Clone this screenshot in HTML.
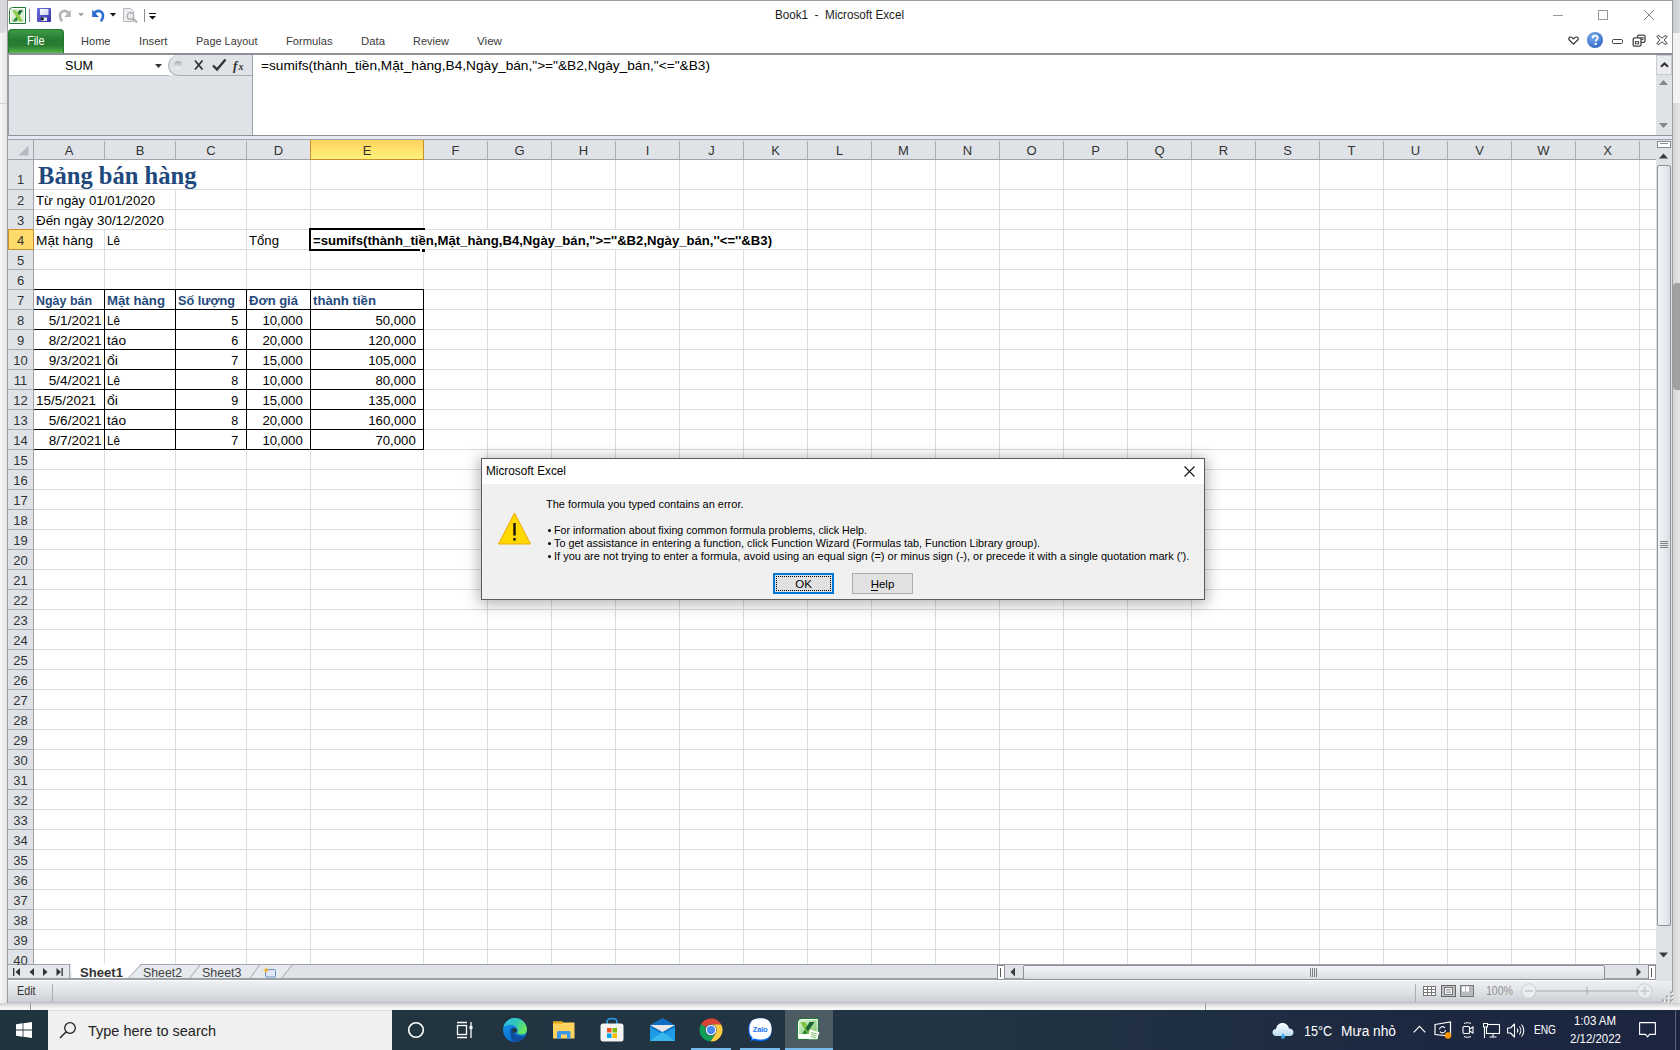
<!DOCTYPE html>
<html><head><meta charset="utf-8"><title>Book1 - Microsoft Excel</title>
<style>
*{box-sizing:border-box;margin:0;padding:0}
html,body{width:1680px;height:1050px;overflow:hidden}
body{position:relative;background:#f3f3f3;font-family:"Liberation Sans",sans-serif;color:#000}
.a{position:absolute}
.t{position:absolute;white-space:pre;line-height:1}
svg{position:absolute;overflow:visible}
</style></head><body>

<div class="a" style="left:0px;top:0px;width:8px;height:1010px;background:linear-gradient(90deg,#f6f6f6,#e2e2e2);"></div>
<div class="a" style="left:0px;top:103px;width:7px;height:1px;background:#cfcfcf;"></div>
<div class="a" style="left:0px;top:0px;width:7px;height:33px;background:#d6d8db;border-radius:0 0 6px 0"></div>
<div class="a" style="left:1672px;top:0px;width:8px;height:1010px;background:linear-gradient(90deg,#d2d2d2,#e6e6e6);"></div>
<div class="a" style="left:1673px;top:0px;width:7px;height:33px;background:linear-gradient(90deg,#c6c9cd,#d9dbde);"></div>
<div class="a" style="left:1673px;top:33px;width:7px;height:70px;background:#f3f3f3;"></div>
<div class="a" style="left:1673px;top:283px;width:7px;height:107px;background:#a0a0a0;border-radius:4px 0 0 4px"></div>
<div class="a" style="left:7px;top:0px;width:1666px;height:1003px;background:#fff;border:1px solid #9c9c9c;border-bottom:none"></div>
<div class="a" style="left:1553px;top:15px;width:10px;height:1px;background:#999;"></div>
<div class="a" style="left:1598px;top:10px;width:10px;height:10px;background:transparent;border:1px solid #999"></div>
<svg style="left:1643px;top:9px" width="12" height="12"><path d="M1 1L11 11M11 1L1 11" stroke="#8a8a8a" stroke-width="1"/></svg>
<svg style="left:9px;top:7px" width="17" height="17" viewBox="0 0 17 17">
<path d="M3.5 0.5H16.5V16.5H0.5V3.5Q0.5 0.5 3.5 0.5Z" fill="#fff" stroke="#1f7a33" stroke-width="1"/>
<path d="M3.5 2H15V15H2V3.5Q2 2 3.5 2Z" fill="#d9eed4"/>
<path d="M10.2 3.3H14L9.6 9.4L7.7 7Z" fill="#1c6a33"/>
<path d="M7.4 9.6L9.3 12L7.3 14.5H3.3Z" fill="#2f8d3c"/>
<path d="M3.3 3.3H7.1L14 14.5H10.2Z" fill="#8ccc48"/>
</svg>
<div class="a" style="left:29px;top:9px;width:1px;height:13px;background:#8a8a8a;"></div>
<svg style="left:37px;top:8px" width="15" height="14" viewBox="0 0 15 14">
<defs><linearGradient id="svg1" x1="0" y1="0" x2="1" y2="1"><stop offset="0" stop-color="#7070e0"/><stop offset="1" stop-color="#3434a8"/></linearGradient>
<linearGradient id="svg2" x1="0" y1="0" x2="1" y2="1"><stop offset="0" stop-color="#ffffff"/><stop offset="1" stop-color="#c8d0ee"/></linearGradient></defs>
<rect x="0" y="0" width="14" height="14" rx="1" fill="url(#svg1)"/>
<rect x="3" y="1" width="8.5" height="6" fill="url(#svg2)"/>
<rect x="4" y="9.5" width="6" height="3.5" fill="#e8e8f0"/>
<rect x="4" y="9.5" width="2.6" height="2.8" fill="#111"/>
</svg>
<svg style="left:58px;top:8px" width="14" height="14" viewBox="0 0 14 14">
<path d="M3.5 12.5C1 9 1.5 4 5.5 3C8 2.4 9.5 3.5 10.5 5" fill="none" stroke="#b4b4b4" stroke-width="2.6" stroke-linecap="round"/>
<path d="M12.8 1.8V9H6.2Z" fill="#b4b4b4"/>
</svg>
<svg style="left:78px;top:13px" width="6" height="4"><path d="M0 0H6L3 3.5Z" fill="#a8a8a8"/></svg>
<svg style="left:91px;top:8px" width="14" height="14" viewBox="0 0 14 14">
<path d="M10.5 12.5C13 9 12.5 4 8.5 3C6 2.4 4.5 3.5 3.5 5" fill="none" stroke="#2f6fd8" stroke-width="2.6" stroke-linecap="round"/>
<path d="M1.2 1.8V9H7.8Z" fill="#2a66d0"/>
</svg>
<svg style="left:110px;top:13px" width="6" height="4"><path d="M0 0H6L3 3.5Z" fill="#111"/></svg>
<svg style="left:123px;top:8px" width="16" height="16" viewBox="0 0 16 16">
<path d="M0.5 0.5H7.5L10.5 3.5V13.5H0.5Z" fill="#ececf2" stroke="#b8b8b8"/>
<circle cx="7.5" cy="8" r="3.3" fill="#e8e8ee" stroke="#a8a8a8" stroke-width="1.2"/>
<path d="M10 10.5L14 14.5" stroke="#b0b0b0" stroke-width="2.2"/>
</svg>
<div class="a" style="left:144px;top:9px;width:1px;height:13px;background:#8a8a8a;"></div>
<div class="a" style="left:149px;top:13px;width:7px;height:1px;background:#111;"></div>
<svg style="left:149px;top:16px" width="7" height="4"><path d="M0 0H7L3.5 3.5Z" fill="#111"/></svg>
<div class="a" style="left:8px;top:29px;width:56px;height:24px;background:linear-gradient(180deg,#3f9a45 0%,#237a30 45%,#2a7e31 70%,#5bb84c 100%);border:1px solid #217a30;border-bottom:none;border-radius:4px 4px 0 0"></div>
<svg style="left:1568px;top:36px" width="11" height="9" viewBox="0 0 11 9"><path d="M5.5 8.2L1.3 4C0.2 2.9 0.8 1 2.5 1C3.6 1 4.6 1.7 5.5 2.8C6.4 1.7 7.4 1 8.5 1C10.2 1 10.8 2.9 9.7 4Z" fill="#fff" stroke="#333" stroke-width="1.2" stroke-linejoin="round"/></svg>
<svg style="left:1587px;top:32px" width="17" height="17" viewBox="0 0 17 17">
<defs><radialGradient id="hg" cx="0.4" cy="0.3" r="0.8"><stop offset="0" stop-color="#7fb0f0"/><stop offset="1" stop-color="#2a5fbf"/></radialGradient></defs>
<circle cx="8" cy="8" r="8" fill="url(#hg)"/>
<path d="M5.6 6.2C5.6 4.6 6.8 3.6 8.2 3.6C9.7 3.6 10.7 4.6 10.7 5.9C10.7 7.6 8.6 7.8 8.6 9.6" fill="none" stroke="#fff" stroke-width="1.7"/>
<rect x="7.6" y="11" width="2" height="2" fill="#fff"/>
</svg>
<div class="a" style="left:1612px;top:39px;width:11px;height:5px;background:transparent;border:1.3px solid #444;border-radius:1.5px"></div>
<svg style="left:1632px;top:34px" width="15" height="14" viewBox="0 0 15 14">
<rect x="5.6" y="1.2" width="7.4" height="7.2" rx="1.3" fill="#fff" stroke="#444" stroke-width="1.3"/>
<rect x="9" y="3.6" width="2" height="2" fill="none" stroke="#444" stroke-width="0.9"/>
<rect x="1.2" y="3.9" width="7.8" height="8.2" rx="1.3" fill="#fff" stroke="#444" stroke-width="1.3"/>
<rect x="3.4" y="7.6" width="3.2" height="2.2" fill="none" stroke="#444" stroke-width="1"/>
</svg>
<svg style="left:1656px;top:35px" width="12" height="10" viewBox="0 0 12 10"><path d="M0.8 1.3L3 0.6L6 3.2L9 0.6L11.2 1.3L8.3 5L11.2 8.7L9 9.4L6 6.8L3 9.4L0.8 8.7L3.7 5Z" fill="#fff" stroke="#444" stroke-width="1" stroke-linejoin="round"/></svg>
<div class="a" style="left:8px;top:53px;width:1664px;height:2px;background:#8c9096;"></div>
<div class="a" style="left:8px;top:55px;width:1648px;height:81px;background:#fff;"></div>
<div class="a" style="left:8px;top:75px;width:245px;height:61px;background:#dfe2e7;"></div>
<div class="a" style="left:8px;top:75px;width:161px;height:1px;background:#b0b4ba;"></div>
<div class="a" style="left:168px;top:55px;width:85px;height:21px;background:#dfe2e7;border-radius:11px 0 0 11px;border:1px solid #a8acb2;border-right:none;border-top:none"></div>
<div class="a" style="left:252px;top:55px;width:1px;height:81px;background:#9da1a7;"></div>
<svg style="left:155px;top:64px" width="7" height="4"><path d="M0 0H7L3.5 4Z" fill="#333"/></svg>
<svg style="left:172px;top:59px" width="82" height="14" viewBox="0 0 82 14">
<defs><linearGradient id="cg" x1="0" y1="0" x2="0" y2="1"><stop offset="0" stop-color="#a9acb1"/><stop offset="1" stop-color="#f4f5f7"/></linearGradient></defs>
<circle cx="6" cy="6" r="4" fill="url(#cg)"/>
<path d="M23 1.5L30.5 10.5M30.5 1.5L23 10.5" stroke="#333" stroke-width="1.8"/>
<path d="M41 6.5L45 10.5L53.5 0.5" fill="none" stroke="#333" stroke-width="2.4"/>
<text x="61" y="10.5" font-family="Liberation Serif" font-style="italic" font-weight="bold" font-size="13" fill="#333">f</text>
<text x="66.5" y="11" font-family="Liberation Serif" font-style="italic" font-weight="bold" font-size="10" fill="#333">x</text>
</svg>
<div class="a" style="left:1656px;top:55px;width:16px;height:81px;background:#dfe2e7;"></div>
<div class="a" style="left:1656px;top:55px;width:16px;height:20px;background:#e9ebee;border:1px solid #c9ccd1"></div>
<svg style="left:1660px;top:62px" width="9" height="6"><path d="M1 4.8L4.5 1.5L8 4.8" fill="none" stroke="#333" stroke-width="2.2"/></svg>
<svg style="left:1659px;top:80px" width="10" height="6"><path d="M0 5H9L4.5 0Z" fill="#7d8a8a"/></svg>
<svg style="left:1659px;top:123px" width="10" height="6"><path d="M0 0H9L4.5 5Z" fill="#7d8a8a"/></svg>
<div class="a" style="left:8px;top:135px;width:1664px;height:1px;background:#8e9399;"></div>
<div class="a" style="left:8px;top:136px;width:1664px;height:3px;background:#e6e9f3;"></div>
<div class="a" style="left:8px;top:139px;width:1664px;height:1px;background:#9fa3a9;"></div>
<div class="a" style="left:8px;top:140px;width:1648px;height:20px;background:#dfe3e8;"></div>
<div class="a" style="left:8px;top:159px;width:1648px;height:1px;background:#9fa3a9;"></div>
<svg style="left:18px;top:145px" width="11" height="11"><path d="M10.5 0.5V10.5H0.5Z" fill="#b7bbc1"/></svg>
<div class="a" style="left:34px;top:160px;width:1622px;height:804px;background:#fff;"></div>
<div class="a" style="left:8px;top:160px;width:25px;height:804px;background:#dfe3e8;"></div>
<div class="a" style="left:33px;top:140px;width:1px;height:824px;background:#9fa3a9;"></div>
<div class="a" style="left:104px;top:160px;width:1px;height:804px;background:#dadcdd;"></div>
<div class="a" style="left:104px;top:141px;width:1px;height:18px;background:#a9adb2;"></div>
<div class="a" style="left:175px;top:160px;width:1px;height:804px;background:#dadcdd;"></div>
<div class="a" style="left:175px;top:141px;width:1px;height:18px;background:#a9adb2;"></div>
<div class="a" style="left:246px;top:160px;width:1px;height:804px;background:#dadcdd;"></div>
<div class="a" style="left:246px;top:141px;width:1px;height:18px;background:#a9adb2;"></div>
<div class="a" style="left:310px;top:160px;width:1px;height:804px;background:#dadcdd;"></div>
<div class="a" style="left:310px;top:141px;width:1px;height:18px;background:#a9adb2;"></div>
<div class="a" style="left:423px;top:160px;width:1px;height:804px;background:#dadcdd;"></div>
<div class="a" style="left:423px;top:141px;width:1px;height:18px;background:#a9adb2;"></div>
<div class="a" style="left:487px;top:160px;width:1px;height:804px;background:#dadcdd;"></div>
<div class="a" style="left:487px;top:141px;width:1px;height:18px;background:#a9adb2;"></div>
<div class="a" style="left:551px;top:160px;width:1px;height:804px;background:#dadcdd;"></div>
<div class="a" style="left:551px;top:141px;width:1px;height:18px;background:#a9adb2;"></div>
<div class="a" style="left:615px;top:160px;width:1px;height:804px;background:#dadcdd;"></div>
<div class="a" style="left:615px;top:141px;width:1px;height:18px;background:#a9adb2;"></div>
<div class="a" style="left:679px;top:160px;width:1px;height:804px;background:#dadcdd;"></div>
<div class="a" style="left:679px;top:141px;width:1px;height:18px;background:#a9adb2;"></div>
<div class="a" style="left:743px;top:160px;width:1px;height:804px;background:#dadcdd;"></div>
<div class="a" style="left:743px;top:141px;width:1px;height:18px;background:#a9adb2;"></div>
<div class="a" style="left:807px;top:160px;width:1px;height:804px;background:#dadcdd;"></div>
<div class="a" style="left:807px;top:141px;width:1px;height:18px;background:#a9adb2;"></div>
<div class="a" style="left:871px;top:160px;width:1px;height:804px;background:#dadcdd;"></div>
<div class="a" style="left:871px;top:141px;width:1px;height:18px;background:#a9adb2;"></div>
<div class="a" style="left:935px;top:160px;width:1px;height:804px;background:#dadcdd;"></div>
<div class="a" style="left:935px;top:141px;width:1px;height:18px;background:#a9adb2;"></div>
<div class="a" style="left:999px;top:160px;width:1px;height:804px;background:#dadcdd;"></div>
<div class="a" style="left:999px;top:141px;width:1px;height:18px;background:#a9adb2;"></div>
<div class="a" style="left:1063px;top:160px;width:1px;height:804px;background:#dadcdd;"></div>
<div class="a" style="left:1063px;top:141px;width:1px;height:18px;background:#a9adb2;"></div>
<div class="a" style="left:1127px;top:160px;width:1px;height:804px;background:#dadcdd;"></div>
<div class="a" style="left:1127px;top:141px;width:1px;height:18px;background:#a9adb2;"></div>
<div class="a" style="left:1191px;top:160px;width:1px;height:804px;background:#dadcdd;"></div>
<div class="a" style="left:1191px;top:141px;width:1px;height:18px;background:#a9adb2;"></div>
<div class="a" style="left:1255px;top:160px;width:1px;height:804px;background:#dadcdd;"></div>
<div class="a" style="left:1255px;top:141px;width:1px;height:18px;background:#a9adb2;"></div>
<div class="a" style="left:1319px;top:160px;width:1px;height:804px;background:#dadcdd;"></div>
<div class="a" style="left:1319px;top:141px;width:1px;height:18px;background:#a9adb2;"></div>
<div class="a" style="left:1383px;top:160px;width:1px;height:804px;background:#dadcdd;"></div>
<div class="a" style="left:1383px;top:141px;width:1px;height:18px;background:#a9adb2;"></div>
<div class="a" style="left:1447px;top:160px;width:1px;height:804px;background:#dadcdd;"></div>
<div class="a" style="left:1447px;top:141px;width:1px;height:18px;background:#a9adb2;"></div>
<div class="a" style="left:1511px;top:160px;width:1px;height:804px;background:#dadcdd;"></div>
<div class="a" style="left:1511px;top:141px;width:1px;height:18px;background:#a9adb2;"></div>
<div class="a" style="left:1575px;top:160px;width:1px;height:804px;background:#dadcdd;"></div>
<div class="a" style="left:1575px;top:141px;width:1px;height:18px;background:#a9adb2;"></div>
<div class="a" style="left:1639px;top:160px;width:1px;height:804px;background:#dadcdd;"></div>
<div class="a" style="left:1639px;top:141px;width:1px;height:18px;background:#a9adb2;"></div>
<div class="a" style="left:34px;top:189px;width:1622px;height:1px;background:#dadcdd;"></div>
<div class="a" style="left:8px;top:189px;width:25px;height:1px;background:#a9adb2;"></div>
<div class="a" style="left:34px;top:209px;width:1622px;height:1px;background:#dadcdd;"></div>
<div class="a" style="left:8px;top:209px;width:25px;height:1px;background:#a9adb2;"></div>
<div class="a" style="left:34px;top:229px;width:1622px;height:1px;background:#dadcdd;"></div>
<div class="a" style="left:8px;top:229px;width:25px;height:1px;background:#a9adb2;"></div>
<div class="a" style="left:34px;top:249px;width:1622px;height:1px;background:#dadcdd;"></div>
<div class="a" style="left:8px;top:249px;width:25px;height:1px;background:#a9adb2;"></div>
<div class="a" style="left:34px;top:269px;width:1622px;height:1px;background:#dadcdd;"></div>
<div class="a" style="left:8px;top:269px;width:25px;height:1px;background:#a9adb2;"></div>
<div class="a" style="left:34px;top:289px;width:1622px;height:1px;background:#dadcdd;"></div>
<div class="a" style="left:8px;top:289px;width:25px;height:1px;background:#a9adb2;"></div>
<div class="a" style="left:34px;top:309px;width:1622px;height:1px;background:#dadcdd;"></div>
<div class="a" style="left:8px;top:309px;width:25px;height:1px;background:#a9adb2;"></div>
<div class="a" style="left:34px;top:329px;width:1622px;height:1px;background:#dadcdd;"></div>
<div class="a" style="left:8px;top:329px;width:25px;height:1px;background:#a9adb2;"></div>
<div class="a" style="left:34px;top:349px;width:1622px;height:1px;background:#dadcdd;"></div>
<div class="a" style="left:8px;top:349px;width:25px;height:1px;background:#a9adb2;"></div>
<div class="a" style="left:34px;top:369px;width:1622px;height:1px;background:#dadcdd;"></div>
<div class="a" style="left:8px;top:369px;width:25px;height:1px;background:#a9adb2;"></div>
<div class="a" style="left:34px;top:389px;width:1622px;height:1px;background:#dadcdd;"></div>
<div class="a" style="left:8px;top:389px;width:25px;height:1px;background:#a9adb2;"></div>
<div class="a" style="left:34px;top:409px;width:1622px;height:1px;background:#dadcdd;"></div>
<div class="a" style="left:8px;top:409px;width:25px;height:1px;background:#a9adb2;"></div>
<div class="a" style="left:34px;top:429px;width:1622px;height:1px;background:#dadcdd;"></div>
<div class="a" style="left:8px;top:429px;width:25px;height:1px;background:#a9adb2;"></div>
<div class="a" style="left:34px;top:449px;width:1622px;height:1px;background:#dadcdd;"></div>
<div class="a" style="left:8px;top:449px;width:25px;height:1px;background:#a9adb2;"></div>
<div class="a" style="left:34px;top:469px;width:1622px;height:1px;background:#dadcdd;"></div>
<div class="a" style="left:8px;top:469px;width:25px;height:1px;background:#a9adb2;"></div>
<div class="a" style="left:34px;top:489px;width:1622px;height:1px;background:#dadcdd;"></div>
<div class="a" style="left:8px;top:489px;width:25px;height:1px;background:#a9adb2;"></div>
<div class="a" style="left:34px;top:509px;width:1622px;height:1px;background:#dadcdd;"></div>
<div class="a" style="left:8px;top:509px;width:25px;height:1px;background:#a9adb2;"></div>
<div class="a" style="left:34px;top:529px;width:1622px;height:1px;background:#dadcdd;"></div>
<div class="a" style="left:8px;top:529px;width:25px;height:1px;background:#a9adb2;"></div>
<div class="a" style="left:34px;top:549px;width:1622px;height:1px;background:#dadcdd;"></div>
<div class="a" style="left:8px;top:549px;width:25px;height:1px;background:#a9adb2;"></div>
<div class="a" style="left:34px;top:569px;width:1622px;height:1px;background:#dadcdd;"></div>
<div class="a" style="left:8px;top:569px;width:25px;height:1px;background:#a9adb2;"></div>
<div class="a" style="left:34px;top:589px;width:1622px;height:1px;background:#dadcdd;"></div>
<div class="a" style="left:8px;top:589px;width:25px;height:1px;background:#a9adb2;"></div>
<div class="a" style="left:34px;top:609px;width:1622px;height:1px;background:#dadcdd;"></div>
<div class="a" style="left:8px;top:609px;width:25px;height:1px;background:#a9adb2;"></div>
<div class="a" style="left:34px;top:629px;width:1622px;height:1px;background:#dadcdd;"></div>
<div class="a" style="left:8px;top:629px;width:25px;height:1px;background:#a9adb2;"></div>
<div class="a" style="left:34px;top:649px;width:1622px;height:1px;background:#dadcdd;"></div>
<div class="a" style="left:8px;top:649px;width:25px;height:1px;background:#a9adb2;"></div>
<div class="a" style="left:34px;top:669px;width:1622px;height:1px;background:#dadcdd;"></div>
<div class="a" style="left:8px;top:669px;width:25px;height:1px;background:#a9adb2;"></div>
<div class="a" style="left:34px;top:689px;width:1622px;height:1px;background:#dadcdd;"></div>
<div class="a" style="left:8px;top:689px;width:25px;height:1px;background:#a9adb2;"></div>
<div class="a" style="left:34px;top:709px;width:1622px;height:1px;background:#dadcdd;"></div>
<div class="a" style="left:8px;top:709px;width:25px;height:1px;background:#a9adb2;"></div>
<div class="a" style="left:34px;top:729px;width:1622px;height:1px;background:#dadcdd;"></div>
<div class="a" style="left:8px;top:729px;width:25px;height:1px;background:#a9adb2;"></div>
<div class="a" style="left:34px;top:749px;width:1622px;height:1px;background:#dadcdd;"></div>
<div class="a" style="left:8px;top:749px;width:25px;height:1px;background:#a9adb2;"></div>
<div class="a" style="left:34px;top:769px;width:1622px;height:1px;background:#dadcdd;"></div>
<div class="a" style="left:8px;top:769px;width:25px;height:1px;background:#a9adb2;"></div>
<div class="a" style="left:34px;top:789px;width:1622px;height:1px;background:#dadcdd;"></div>
<div class="a" style="left:8px;top:789px;width:25px;height:1px;background:#a9adb2;"></div>
<div class="a" style="left:34px;top:809px;width:1622px;height:1px;background:#dadcdd;"></div>
<div class="a" style="left:8px;top:809px;width:25px;height:1px;background:#a9adb2;"></div>
<div class="a" style="left:34px;top:829px;width:1622px;height:1px;background:#dadcdd;"></div>
<div class="a" style="left:8px;top:829px;width:25px;height:1px;background:#a9adb2;"></div>
<div class="a" style="left:34px;top:849px;width:1622px;height:1px;background:#dadcdd;"></div>
<div class="a" style="left:8px;top:849px;width:25px;height:1px;background:#a9adb2;"></div>
<div class="a" style="left:34px;top:869px;width:1622px;height:1px;background:#dadcdd;"></div>
<div class="a" style="left:8px;top:869px;width:25px;height:1px;background:#a9adb2;"></div>
<div class="a" style="left:34px;top:889px;width:1622px;height:1px;background:#dadcdd;"></div>
<div class="a" style="left:8px;top:889px;width:25px;height:1px;background:#a9adb2;"></div>
<div class="a" style="left:34px;top:909px;width:1622px;height:1px;background:#dadcdd;"></div>
<div class="a" style="left:8px;top:909px;width:25px;height:1px;background:#a9adb2;"></div>
<div class="a" style="left:34px;top:929px;width:1622px;height:1px;background:#dadcdd;"></div>
<div class="a" style="left:8px;top:929px;width:25px;height:1px;background:#a9adb2;"></div>
<div class="a" style="left:34px;top:949px;width:1622px;height:1px;background:#dadcdd;"></div>
<div class="a" style="left:8px;top:949px;width:25px;height:1px;background:#a9adb2;"></div>
<div class="a" style="left:104px;top:160px;width:1px;height:29px;background:#fff;"></div>
<div class="a" style="left:175px;top:160px;width:1px;height:29px;background:#fff;"></div>
<div class="a" style="left:104px;top:190px;width:1px;height:19px;background:#fff;"></div>
<div class="a" style="left:104px;top:210px;width:1px;height:19px;background:#fff;"></div>
<div class="a" style="left:310px;top:140px;width:114px;height:20px;background:linear-gradient(#fdd25c,#fff27c);border:1px solid #cc9030;border-top:none"></div>
<div class="a" style="left:8px;top:229px;width:26px;height:21px;background:#fedb6a;border:1px solid #cc9030"></div>
<div class="a" style="left:34px;top:289px;width:390px;height:1px;background:#000;"></div>
<div class="a" style="left:34px;top:309px;width:390px;height:1px;background:#000;"></div>
<div class="a" style="left:34px;top:329px;width:390px;height:1px;background:#000;"></div>
<div class="a" style="left:34px;top:349px;width:390px;height:1px;background:#000;"></div>
<div class="a" style="left:34px;top:369px;width:390px;height:1px;background:#000;"></div>
<div class="a" style="left:34px;top:389px;width:390px;height:1px;background:#000;"></div>
<div class="a" style="left:34px;top:409px;width:390px;height:1px;background:#000;"></div>
<div class="a" style="left:34px;top:429px;width:390px;height:1px;background:#000;"></div>
<div class="a" style="left:34px;top:449px;width:390px;height:1px;background:#000;"></div>
<div class="a" style="left:104px;top:289px;width:1px;height:161px;background:#000;"></div>
<div class="a" style="left:175px;top:289px;width:1px;height:161px;background:#000;"></div>
<div class="a" style="left:246px;top:289px;width:1px;height:161px;background:#000;"></div>
<div class="a" style="left:310px;top:289px;width:1px;height:161px;background:#000;"></div>
<div class="a" style="left:423px;top:289px;width:1px;height:161px;background:#000;"></div>
<div class="a" style="left:310px;top:229px;width:114px;height:21px;background:#fff;"></div>
<div class="a" style="left:424px;top:230px;width:360px;height:19px;background:#fff;"></div>
<div class="a" style="left:309px;top:228px;width:116px;height:2px;background:#000;"></div>
<div class="a" style="left:309px;top:228px;width:2px;height:23px;background:#000;"></div>
<div class="a" style="left:309px;top:249px;width:111px;height:2px;background:#000;"></div>
<div class="a" style="left:421px;top:248px;width:5px;height:5px;background:#000;border:1px solid #fff"></div>
<div class="a" style="left:1656px;top:140px;width:16px;height:841px;background:#dfe2e7;"></div>
<div class="a" style="left:1657px;top:141px;width:14px;height:7px;background:#fff;border:1px solid #8a8e94"></div>
<div class="a" style="left:1660px;top:143px;width:8px;height:1px;background:#8a8e94;"></div>
<svg style="left:1659px;top:153px" width="10" height="6"><path d="M0 5.5H9L4.5 0.5Z" fill="#3a3a3a"/></svg>
<div class="a" style="left:1657px;top:165px;width:14px;height:761px;background:linear-gradient(90deg,#f2f4f7,#e6e9ee 60%,#d8dce2);border:1px solid #8e9298;border-radius:2px"></div>
<div class="a" style="left:1660px;top:541px;width:8px;height:1px;background:#808080;"></div>
<div class="a" style="left:1660px;top:543px;width:8px;height:1px;background:#808080;"></div>
<div class="a" style="left:1660px;top:545px;width:8px;height:1px;background:#808080;"></div>
<div class="a" style="left:1660px;top:547px;width:8px;height:1px;background:#808080;"></div>
<svg style="left:1659px;top:952px" width="10" height="6"><path d="M0 0.5H9L4.5 5.5Z" fill="#3a3a3a"/></svg>
<div class="a" style="left:8px;top:964px;width:1648px;height:16px;background:#dfe3e8;"></div>
<div class="a" style="left:8px;top:964px;width:1648px;height:1px;background:#9fa3a9;"></div>
<div class="a" style="left:8px;top:964px;width:62px;height:15px;background:#e4e7eb;border-top:1px solid #9fa3a9;border-right:1px solid #9fa3a9"></div>
<svg style="left:13px;top:967px" width="56" height="10" viewBox="0 0 56 10">
<rect x="0" y="1" width="1.3" height="8" fill="#333"/><path d="M7 1V9L2.5 5Z" fill="#333"/>
<path d="M21 1V9L16.5 5Z" fill="#333"/>
<path d="M30 1V9L34.5 5Z" fill="#333"/>
<path d="M43.5 1V9L48 5Z" fill="#333"/><rect x="48.5" y="1" width="1.3" height="8" fill="#333"/>
</svg>
<svg style="left:60px;top:964px" width="240" height="16" viewBox="0 0 240 16">
<path d="M10.5 -0.5H81L67.5 15H12Z" fill="#fff"/>
<path d="M67.5 15L81.2 0.5H140.5L129 15Z" fill="#e6e9ed"/>
<path d="M129 15L140.5 0.5H200L189.5 15Z" fill="#e6e9ed"/>
<path d="M189.5 15L200 0.5H232.5L221 15Z" fill="#e6e9ed"/>
<path d="M67.5 15L81.2 0.5H232.5L221 15M129 15L140.5 0.5M189.5 15L200 0.5" fill="none" stroke="#a3a7ad" stroke-width="1"/>
</svg>
<div class="a" style="left:8px;top:978px;width:1648px;height:2px;background:#9aa0a8;"></div>
<svg style="left:262px;top:966px" width="16" height="13" viewBox="0 0 16 13">
<rect x="3.5" y="3.5" width="10" height="7.5" rx="1" fill="#dfe8f6" stroke="#6c8fc8"/>
<path d="M4 1L5 3.5L7.5 4L5 5L4 7.5L3 5L0.5 4L3 3.5Z" fill="#f3b11c"/>
</svg>
<div class="a" style="left:997px;top:965px;width:8px;height:15px;background:#fff;border:1px solid #8e9298"></div>
<div class="a" style="left:1000px;top:968px;width:1px;height:9px;background:#555;"></div>
<svg style="left:1010px;top:967px" width="6" height="10"><path d="M5 0.5V9.5L0.5 5Z" fill="#3a3a3a"/></svg>
<div class="a" style="left:1023px;top:965px;width:582px;height:15px;background:linear-gradient(#f3f5f8,#e5e8ec 60%,#d9dce1);border:1px solid #8e9298;border-radius:2px"></div>
<div class="a" style="left:1310px;top:968px;width:1px;height:9px;background:#808080;"></div>
<div class="a" style="left:1312px;top:968px;width:1px;height:9px;background:#808080;"></div>
<div class="a" style="left:1314px;top:968px;width:1px;height:9px;background:#808080;"></div>
<div class="a" style="left:1316px;top:968px;width:1px;height:9px;background:#808080;"></div>
<svg style="left:1636px;top:967px" width="6" height="10"><path d="M0.5 0.5V9.5L5 5Z" fill="#3a3a3a"/></svg>
<div class="a" style="left:1648px;top:965px;width:8px;height:15px;background:#fff;border:1px solid #8e9298"></div>
<div class="a" style="left:1651px;top:968px;width:1px;height:9px;background:#555;"></div>
<div class="a" style="left:8px;top:981px;width:1664px;height:22px;background:linear-gradient(#eef0f3,#dfe2e6 50%,#c9ccd1);"></div>
<div class="a" style="left:8px;top:1002px;width:1664px;height:1px;background:#b9bcc1;"></div>
<div class="a" style="left:52px;top:984px;width:1px;height:18px;background:#a9acb1;"></div>
<div class="a" style="left:1415px;top:984px;width:1px;height:18px;background:#a9acb1;"></div>
<svg style="left:1422px;top:985px" width="54" height="12" viewBox="0 0 54 12">
<rect x="1.5" y="1.5" width="12" height="9" fill="#fff" stroke="#777"/>
<path d="M1.5 4.5H13.5M1.5 7.5H13.5M5.5 1.5V10.5M9.5 1.5V10.5" stroke="#777"/>
<rect x="19.5" y="0.5" width="14" height="11" fill="#c0c3c8" stroke="#666"/>
<rect x="22.5" y="2.5" width="8" height="7" fill="#f6f6f6" stroke="#777"/>
<path d="M24 4.5H29M24 6H29M24 7.5H29" stroke="#999" stroke-width="0.8"/>
<rect x="38.5" y="0.5" width="13" height="11" fill="#b7bac0" stroke="#777"/>
<rect x="40" y="1.5" width="3" height="5" fill="#fff"/><rect x="44" y="1.5" width="3" height="5" fill="#fff"/>
</svg>
<svg style="left:1520px;top:982px" width="135" height="18" viewBox="0 0 135 18">
<line x1="15" y1="9" x2="117" y2="9" stroke="#a5a9ae" stroke-width="1.2"/>
<line x1="67" y1="5" x2="67" y2="13" stroke="#a5a9ae" stroke-width="1"/>
<circle cx="8.7" cy="9" r="7.2" fill="#eceef1" stroke="#c9ccd1"/>
<line x1="4.5" y1="9" x2="13" y2="9" stroke="#c9ccd1" stroke-width="1.8"/>
<circle cx="124.7" cy="9" r="7.2" fill="#eceef1" stroke="#c9ccd1"/>
<line x1="120.5" y1="9" x2="129" y2="9" stroke="#c9ccd1" stroke-width="1.8"/>
<line x1="124.7" y1="4.8" x2="124.7" y2="13.2" stroke="#c9ccd1" stroke-width="1.8"/>
</svg>
<svg style="left:1660px;top:990px" width="13" height="13" viewBox="0 0 13 13">
<g fill="#fff"><rect x="11" y="2.5" width="2" height="2"/><rect x="7" y="6.5" width="2" height="2"/><rect x="11" y="6.5" width="2" height="2"/><rect x="3" y="10.5" width="2" height="2"/><rect x="7" y="10.5" width="2" height="2"/><rect x="11" y="10.5" width="2" height="2"/></g>
<g fill="#9ea2a8"><rect x="10" y="1.5" width="2" height="2"/><rect x="6" y="5.5" width="2" height="2"/><rect x="10" y="5.5" width="2" height="2"/><rect x="2" y="9.5" width="2" height="2"/><rect x="6" y="9.5" width="2" height="2"/><rect x="10" y="9.5" width="2" height="2"/></g>
</svg>
<div class="a" style="left:0px;top:1003px;width:1680px;height:7px;background:#f6f6f6;"></div>
<div class="a" style="left:0px;top:1003px;width:1680px;height:5px;background:linear-gradient(#cfcfcf,#f6f6f6);"></div>
<div class="a" style="left:30px;top:1003px;width:1px;height:7px;background:#9a9a9a;"></div>
<div class="a" style="left:1205px;top:1003px;width:1px;height:7px;background:#9a9a9a;"></div>
<div class="a" style="left:481px;top:458px;width:724px;height:142px;background:#f0f0f0;border:1px solid #5c5c5c;box-shadow:0 2px 14px 2px rgba(0,0,0,0.3);z-index:5"></div>
<div class="a" style="left:482px;top:459px;width:722px;height:25px;background:#fff;z-index:5"></div>
<svg style="left:1184px;top:466px;z-index:6" width="11" height="11"><path d="M0.5 0.5L10.5 10.5M10.5 0.5L0.5 10.5" stroke="#111" stroke-width="1.1"/></svg>
<svg style="left:498px;top:512px;z-index:6" width="34" height="34" viewBox="0 0 34 34">
<path d="M16.5 1L32.5 32H0.5Z" fill="#ffd800" stroke="#f0a800" stroke-width="1" stroke-linejoin="round"/>
<rect x="15.3" y="11" width="2.4" height="12.5" fill="#111"/>
<rect x="15.3" y="26" width="2.4" height="2.6" fill="#111"/>
</svg>
<div class="a" style="left:548px;top:529px;width:3px;height:3px;border-radius:50%;background:#000;z-index:7"></div>
<div class="a" style="left:548px;top:542px;width:3px;height:3px;border-radius:50%;background:#000;z-index:7"></div>
<div class="a" style="left:548px;top:555px;width:3px;height:3px;border-radius:50%;background:#000;z-index:7"></div>
<div class="a" style="left:773px;top:573px;width:61px;height:21px;background:#e1e1e1;border:2px solid #0078d7;z-index:6"></div>
<div class="a" style="left:776px;top:576px;width:55px;height:15px;background:transparent;border:1px dotted #000;z-index:7"></div>
<div class="a" style="left:852px;top:573px;width:61px;height:21px;background:#e1e1e1;border:1px solid #adadad;z-index:6"></div>
<div class="a" style="left:871px;top:590px;width:7px;height:1px;background:#000;z-index:7"></div>
<div class="a" style="left:0px;top:1010px;width:1680px;height:40px;background:linear-gradient(90deg,#20343d 0%,#223443 55%,#1f2f42 72%,#1c2740 85%,#1b2540 100%);"></div>
<div class="a" style="left:48px;top:1010px;width:344px;height:40px;background:#f0f0f0;border-top:1px solid #dcdcdc"></div>
<svg style="left:16px;top:1022px" width="16" height="16" viewBox="0 0 16 16">
<path d="M0 2.2L6.6 1.3V7.5H0Z M7.4 1.2L16 0V7.5H7.4Z M0 8.4H6.6V14.7L0 13.8Z M7.4 8.4H16V16L7.4 14.8Z" fill="#fff"/>
</svg>
<svg style="left:59px;top:1021px" width="18" height="18" viewBox="0 0 18 18"><circle cx="11" cy="7" r="5.3" fill="none" stroke="#222" stroke-width="1.3"/><path d="M7.2 10.8L1 17" stroke="#222" stroke-width="1.5"/></svg>
<svg style="left:407px;top:1021px" width="18" height="18"><circle cx="9" cy="9" r="7.3" fill="none" stroke="#fff" stroke-width="1.6"/></svg>
<svg style="left:456px;top:1021px" width="18" height="18" viewBox="0 0 18 18">
<path d="M1 1.5H11M1 16.5H11" stroke="#fff" stroke-width="1.3"/>
<rect x="1.5" y="4.5" width="9" height="9" fill="none" stroke="#fff" stroke-width="1.3"/>
<path d="M15 1V17" stroke="#fff" stroke-width="1.3"/><rect x="13.5" y="5" width="3" height="3" fill="#fff"/>
</svg>
<svg style="left:503px;top:1018px" width="24" height="24" viewBox="0 0 24 24">
<defs><linearGradient id="eg1" x1="0" y1="0" x2="0.3" y2="1"><stop offset="0" stop-color="#1a9be8"/><stop offset="1" stop-color="#0b6fd6"/></linearGradient>
<linearGradient id="eg2" x1="0" y1="0" x2="1" y2="0.4"><stop offset="0" stop-color="#35c2f0"/><stop offset="0.55" stop-color="#2fc4b8"/><stop offset="1" stop-color="#66e860"/></linearGradient></defs>
<circle cx="12" cy="12" r="11.9" fill="url(#eg1)"/>
<path d="M7.2 13C7.2 9.5 9.8 8.4 12.2 9.8C10 10.4 9.4 13.2 10.8 15.2C12.8 17.6 17 18.6 22.4 18C20.3 21.5 16.5 23.9 12 23.9C9 23.9 7.2 19 7.2 13Z" fill="#0f4f9e"/>
<path d="M0.3 9.3C1.6 3.8 6.3 0.1 12 0.1C18.6 0.1 23.9 5.3 23.9 11.8C23.9 15 21.8 16.6 18.5 16.6C16 16.6 14.2 15.6 13.6 14.6C15.2 13.6 15.2 11 13.6 9.4C12.2 7.9 10.2 6.8 7.6 6.8C4.6 6.8 2 7.9 0.3 9.3Z" fill="url(#eg2)"/>
<circle cx="11.6" cy="12.6" r="2.3" fill="#213540"/>
</svg>
<svg style="left:553px;top:1021px" width="22" height="18" viewBox="0 0 22 18">
<path d="M0 0.5H9L10 1.5H21.5V17.5H0Z" fill="#ffd560"/>
<path d="M0 0.5H9L10 1.5V2.5H0Z" fill="#e7a50e"/>
<path d="M4 17.8V11.5Q4 10 5.5 10H16Q17.5 10 17.5 11.5V17.8H14V13.5H8V17.8Z" fill="#3a98e6"/>
</svg>
<svg style="left:600px;top:1018px" width="24" height="24" viewBox="0 0 24 24">
<path d="M7 6V4C7 1.5 9 0.5 12 0.5C15 0.5 17 1.5 17 4V6" fill="none" stroke="#2ba0e8" stroke-width="1.6"/>
<rect x="0.5" y="5.5" width="23" height="18" rx="2.5" fill="#f4f4f4"/>
<rect x="7" y="10" width="4.5" height="4.5" fill="#f25022"/><rect x="12.5" y="10" width="4.5" height="4.5" fill="#7fba00"/>
<rect x="7" y="15.5" width="4.5" height="4.5" fill="#00a4ef"/><rect x="12.5" y="15.5" width="4.5" height="4.5" fill="#ffb900"/>
</svg>
<svg style="left:650px;top:1018px" width="25" height="23" viewBox="0 0 25 23">
<path d="M0 7L12.5 0L25 7V23H0Z" fill="#0f6cc0"/>
<path d="M0 7H25L12.5 14Z" fill="#e8e8e8"/>
<path d="M0 9L12.5 16L25 9V23H0Z" fill="#1e9be6"/>
<path d="M0 23L12.5 14L25 23Z" fill="#39b8f0"/>
</svg>
<svg style="left:699px;top:1018px" width="24" height="24" viewBox="-12 -12 24 24">
<path d="M0 -11.5A11.5 11.5 0 0 1 9.96 -5.75H0A5.75 5.75 0 0 0 -4.98 -2.875L-9.96 -5.75A11.5 11.5 0 0 1 0 -11.5Z" fill="#db4437"/>
<path d="M-9.96 -5.75A11.5 11.5 0 0 0 -0.5 11.49L4.98 2.875A5.75 5.75 0 0 1 -4.98 -2.875Z" fill="#0f9d58"/>
<path d="M9.96 -5.75A11.5 11.5 0 0 1 -0.5 11.49L4.98 2.875A5.75 5.75 0 0 0 0 -5.75Z" fill="#ffcd40"/>
<path d="M0 -11.5A11.5 11.5 0 0 1 9.96 -5.75H0Z" fill="#db4437"/>
<circle r="5.3" fill="#fff"/><circle r="4.2" fill="#4a8af4"/>
</svg>
<svg style="left:747px;top:1017px" width="26" height="26" viewBox="0 0 26 26">
<path d="M13 1.2C20.5 1.2 24.6 4.6 24.6 12.4C24.6 20.6 20.6 24.2 13 24.2C10.6 24.2 8.6 23.8 6.9 23.1L3.6 24.4L4.3 21.2C2.2 19.3 1.4 16.5 1.4 12.4C1.4 4.6 5.5 1.2 13 1.2Z" fill="#0068ff"/>
<path d="M13 1.2C20.5 1.2 24.6 4.6 24.6 12C24.6 19.4 20.6 22.6 13 22.6C10.8 22.6 8.9 22.3 7.3 21.6L5.2 22.4L5.6 20.4C3 18.6 2.4 15.8 2.4 12C2.4 4.6 5.5 1.2 13 1.2Z" fill="#fff"/>
<text x="13.2" y="14.6" text-anchor="middle" font-family="Liberation Sans" font-weight="bold" font-size="7.6" fill="#1a73f0" textLength="15">Zalo</text>
</svg>
<div class="a" style="left:785px;top:1010px;width:48px;height:40px;background:#4c5b64;"></div>
<svg style="left:797px;top:1018px" width="23" height="22" viewBox="0 0 23 22">
<defs><linearGradient id="xg" x1="0" y1="0" x2="1" y2="1"><stop offset="0" stop-color="#e2f3dc"/><stop offset="1" stop-color="#7ccb6a"/></linearGradient></defs>
<path d="M5 0H21.8V21.8H0V5Q0 0 5 0Z" fill="#1e7b34"/>
<path d="M5.3 1H20.8V20.8H1V5.3Q1 1 5.3 1Z" fill="#f6fbf4"/>
<path d="M5.5 2H19.8V16H2V5.5Q2 2 5.5 2Z" fill="url(#xg)"/>
<path d="M3.2 4H8.2L17.5 19H12.3Z" fill="#7ec544"/>
<path d="M12.6 4H17.6L11 13.6L8.6 10.4Z" fill="#1d6336"/>
<path d="M2.6 19H7.6L10.4 14.8L8 11.6Z" fill="#2f8a38"/>
<path d="M2 16H15L14 20.8H1Z" fill="#fff"/>
<path d="M12.5 11.5L22.5 14.2L20 21.2H11.5Z" fill="#fff"/>
<path d="M14 14.5L20 16M14 16.5L19.5 18M13.5 18.5L19 20" stroke="#5bb04a" stroke-width="0.8"/>
</svg>
<div class="a" style="left:691px;top:1048px;width:40px;height:2px;background:#76b9ed;"></div>
<div class="a" style="left:740px;top:1048px;width:40px;height:2px;background:#76b9ed;"></div>
<div class="a" style="left:785px;top:1048px;width:48px;height:2px;background:#76b9ed;"></div>
<svg style="left:1272px;top:1022px" width="22" height="17" viewBox="0 0 22 17">
<defs><linearGradient id="cl" x1="0" y1="0" x2="0" y2="1"><stop offset="0" stop-color="#ffffff"/><stop offset="1" stop-color="#b9dcf2"/></linearGradient></defs>
<path d="M4.5 14C1.5 14 0.5 12 0.5 10.5C0.5 8.5 2 7 4 7C4.5 3.5 7 1 10.5 1C14 1 16.5 3.5 17 6.5C19.5 6.5 21.5 8 21.5 10.5C21.5 12.5 20 14 17.5 14Z" fill="url(#cl)"/>
<path d="M11 11L13 14.5C13 16 12 16.8 11 16.8C10 16.8 9 16 9 14.5Z" fill="#3fa5e8"/>
</svg>
<svg style="left:1413px;top:1025px" width="13" height="8"><path d="M0.7 7.3L6.5 1.3L12.3 7.3" fill="none" stroke="#fff" stroke-width="1.2"/></svg>
<svg style="left:1434px;top:1021px" width="19" height="18" viewBox="0 0 19 18">
<path d="M1 3.5L16.5 1V15L1 13.5Z" fill="none" stroke="#fff" stroke-width="1.2"/>
<path d="M5.5 8.5A3 3 0 0 1 11 7M11.5 9A3 3 0 0 1 6 10.5" fill="none" stroke="#fff" stroke-width="1.1"/>
<circle cx="14" cy="14.5" r="3.2" fill="#ff9800"/>
</svg>
<svg style="left:1462px;top:1022px" width="12" height="16" viewBox="0 0 12 16">
<path d="M2 1.5C4 0.5 7 0.5 9 1.5M2 14.5C4 15.5 7 15.5 9 14.5" fill="none" stroke="#fff" stroke-width="1"/>
<rect x="1" y="4.5" width="6.5" height="7" rx="1" fill="none" stroke="#fff" stroke-width="1.1"/>
<path d="M7.5 7L11 5V11L7.5 9" fill="none" stroke="#fff" stroke-width="1.1"/>
</svg>
<svg style="left:1483px;top:1023px" width="17" height="15" viewBox="0 0 17 15">
<rect x="3.5" y="1.5" width="13" height="9" fill="none" stroke="#fff" stroke-width="1.1"/>
<path d="M10 10.5V13.5M6.5 14H13.5M1.5 1V15" stroke="#fff" stroke-width="1.1"/>
<rect x="0.5" y="0.5" width="4" height="3.5" fill="#1c2a3b" stroke="#fff" stroke-width="1"/>
</svg>
<svg style="left:1507px;top:1023px" width="17" height="15" viewBox="0 0 17 15">
<path d="M0.6 5H3.5L7.5 1V14L3.5 10H0.6Z" fill="none" stroke="#fff" stroke-width="1.1" stroke-linejoin="round"/>
<path d="M10 5.5A3 3 0 0 1 10 9.5M12.3 3.5A6 6 0 0 1 12.3 11.5M14.5 1.5A9 9 0 0 1 14.5 13.5" fill="none" stroke="#fff" stroke-width="1.1"/>
</svg>
<svg style="left:1639px;top:1022px" width="17" height="17" viewBox="0 0 17 17">
<path d="M0.6 0.6H16.4V12.4H10.5L8.5 14.8L6.5 12.4H0.6Z" fill="none" stroke="#fff" stroke-width="1.1" stroke-linejoin="round"/>
</svg>
<div class="a" style="left:1675px;top:1010px;width:1px;height:40px;background:#5a6478;"></div>
<div class="a" style="left:8px;top:53px;width:1px;height:83px;background:#969ca3;"></div>
<div class="t" style="top:8.84px;font-family:'Liberation Sans';font-size:12px;color:#1a1a1a;left:775px;transform:scaleX(0.9720);transform-origin:0 0;">Book1  -  Microsoft Excel</div>
<div class="t" style="top:34.84px;font-family:'Liberation Sans';font-size:12px;color:#fff;left:27px;transform:scaleX(0.9047);transform-origin:0 0;">File</div>
<div class="t" style="top:35.69px;font-family:'Liberation Sans';font-size:11px;color:#3b3b3b;left:81px;transform:scaleX(1.0053);transform-origin:0 0;">Home</div>
<div class="t" style="top:35.69px;font-family:'Liberation Sans';font-size:11px;color:#3b3b3b;left:139px;transform:scaleX(1.0358);transform-origin:0 0;">Insert</div>
<div class="t" style="top:35.69px;font-family:'Liberation Sans';font-size:11px;color:#3b3b3b;left:196px;transform:scaleX(0.9954);transform-origin:0 0;">Page Layout</div>
<div class="t" style="top:35.69px;font-family:'Liberation Sans';font-size:11px;color:#3b3b3b;left:286px;transform:scaleX(1.0143);transform-origin:0 0;">Formulas</div>
<div class="t" style="top:35.69px;font-family:'Liberation Sans';font-size:11px;color:#3b3b3b;left:361px;transform:scaleX(1.0323);transform-origin:0 0;">Data</div>
<div class="t" style="top:35.69px;font-family:'Liberation Sans';font-size:11px;color:#3b3b3b;left:413px;">Review</div>
<div class="t" style="top:35.69px;font-family:'Liberation Sans';font-size:11px;color:#3b3b3b;left:477px;transform:scaleX(1.0568);transform-origin:0 0;">View</div>
<div class="t" style="top:59.00px;font-family:'Liberation Sans';font-size:13px;color:#000;left:65px;transform:scaleX(0.9692);transform-origin:0 0;">SUM</div>
<div class="t" style="top:58.50px;font-family:'Liberation Sans';font-size:13px;color:#000;left:261px;transform:scaleX(1.0529);transform-origin:0 0;">=sumifs(thành_tiền,Mặt_hàng,B4,Ngày_bán,"&gt;="&amp;B2,Ngày_bán,"&lt;="&amp;B3)</div>
<div class="t" style="top:144.00px;font-family:'Liberation Sans';font-size:13px;color:#333;left:64.66px;">A</div>
<div class="t" style="top:144.00px;font-family:'Liberation Sans';font-size:13px;color:#333;left:135.66px;">B</div>
<div class="t" style="top:144.00px;font-family:'Liberation Sans';font-size:13px;color:#333;left:206.30px;">C</div>
<div class="t" style="top:144.00px;font-family:'Liberation Sans';font-size:13px;color:#333;left:273.80px;">D</div>
<div class="t" style="top:144.00px;font-family:'Liberation Sans';font-size:13px;color:#333;left:362.66px;">E</div>
<div class="t" style="top:144.00px;font-family:'Liberation Sans';font-size:13px;color:#333;left:451.52px;">F</div>
<div class="t" style="top:144.00px;font-family:'Liberation Sans';font-size:13px;color:#333;left:514.44px;">G</div>
<div class="t" style="top:144.00px;font-family:'Liberation Sans';font-size:13px;color:#333;left:578.80px;">H</div>
<div class="t" style="top:144.00px;font-family:'Liberation Sans';font-size:13px;color:#333;left:645.69px;">I</div>
<div class="t" style="top:144.00px;font-family:'Liberation Sans';font-size:13px;color:#333;left:708.25px;">J</div>
<div class="t" style="top:144.00px;font-family:'Liberation Sans';font-size:13px;color:#333;left:771.16px;">K</div>
<div class="t" style="top:144.00px;font-family:'Liberation Sans';font-size:13px;color:#333;left:835.88px;">L</div>
<div class="t" style="top:144.00px;font-family:'Liberation Sans';font-size:13px;color:#333;left:898.08px;">M</div>
<div class="t" style="top:144.00px;font-family:'Liberation Sans';font-size:13px;color:#333;left:962.80px;">N</div>
<div class="t" style="top:144.00px;font-family:'Liberation Sans';font-size:13px;color:#333;left:1026.44px;">O</div>
<div class="t" style="top:144.00px;font-family:'Liberation Sans';font-size:13px;color:#333;left:1091.16px;">P</div>
<div class="t" style="top:144.00px;font-family:'Liberation Sans';font-size:13px;color:#333;left:1154.44px;">Q</div>
<div class="t" style="top:144.00px;font-family:'Liberation Sans';font-size:13px;color:#333;left:1218.80px;">R</div>
<div class="t" style="top:144.00px;font-family:'Liberation Sans';font-size:13px;color:#333;left:1283.16px;">S</div>
<div class="t" style="top:144.00px;font-family:'Liberation Sans';font-size:13px;color:#333;left:1347.52px;">T</div>
<div class="t" style="top:144.00px;font-family:'Liberation Sans';font-size:13px;color:#333;left:1410.80px;">U</div>
<div class="t" style="top:144.00px;font-family:'Liberation Sans';font-size:13px;color:#333;left:1475.16px;">V</div>
<div class="t" style="top:144.00px;font-family:'Liberation Sans';font-size:13px;color:#333;left:1537.36px;">W</div>
<div class="t" style="top:144.00px;font-family:'Liberation Sans';font-size:13px;color:#333;left:1603.16px;">X</div>
<div class="t" style="top:173.00px;font-family:'Liberation Sans';font-size:13px;color:#333;left:16.88px;">1</div>
<div class="t" style="top:193.50px;font-family:'Liberation Sans';font-size:13px;color:#333;left:16.88px;">2</div>
<div class="t" style="top:213.50px;font-family:'Liberation Sans';font-size:13px;color:#333;left:16.88px;">3</div>
<div class="t" style="top:233.50px;font-family:'Liberation Sans';font-size:13px;color:#333;left:16.88px;">4</div>
<div class="t" style="top:253.50px;font-family:'Liberation Sans';font-size:13px;color:#333;left:16.88px;">5</div>
<div class="t" style="top:273.50px;font-family:'Liberation Sans';font-size:13px;color:#333;left:16.88px;">6</div>
<div class="t" style="top:293.50px;font-family:'Liberation Sans';font-size:13px;color:#333;left:16.88px;">7</div>
<div class="t" style="top:313.50px;font-family:'Liberation Sans';font-size:13px;color:#333;left:16.88px;">8</div>
<div class="t" style="top:333.50px;font-family:'Liberation Sans';font-size:13px;color:#333;left:16.88px;">9</div>
<div class="t" style="top:353.50px;font-family:'Liberation Sans';font-size:13px;color:#333;left:13.27px;">10</div>
<div class="t" style="top:373.50px;font-family:'Liberation Sans';font-size:13px;color:#333;left:13.75px;">11</div>
<div class="t" style="top:393.50px;font-family:'Liberation Sans';font-size:13px;color:#333;left:13.27px;">12</div>
<div class="t" style="top:413.50px;font-family:'Liberation Sans';font-size:13px;color:#333;left:13.27px;">13</div>
<div class="t" style="top:433.50px;font-family:'Liberation Sans';font-size:13px;color:#333;left:13.27px;">14</div>
<div class="t" style="top:453.50px;font-family:'Liberation Sans';font-size:13px;color:#333;left:13.27px;">15</div>
<div class="t" style="top:473.50px;font-family:'Liberation Sans';font-size:13px;color:#333;left:13.27px;">16</div>
<div class="t" style="top:493.50px;font-family:'Liberation Sans';font-size:13px;color:#333;left:13.27px;">17</div>
<div class="t" style="top:513.50px;font-family:'Liberation Sans';font-size:13px;color:#333;left:13.27px;">18</div>
<div class="t" style="top:533.50px;font-family:'Liberation Sans';font-size:13px;color:#333;left:13.27px;">19</div>
<div class="t" style="top:553.50px;font-family:'Liberation Sans';font-size:13px;color:#333;left:13.27px;">20</div>
<div class="t" style="top:573.50px;font-family:'Liberation Sans';font-size:13px;color:#333;left:13.27px;">21</div>
<div class="t" style="top:593.50px;font-family:'Liberation Sans';font-size:13px;color:#333;left:13.27px;">22</div>
<div class="t" style="top:613.50px;font-family:'Liberation Sans';font-size:13px;color:#333;left:13.27px;">23</div>
<div class="t" style="top:633.50px;font-family:'Liberation Sans';font-size:13px;color:#333;left:13.27px;">24</div>
<div class="t" style="top:653.50px;font-family:'Liberation Sans';font-size:13px;color:#333;left:13.27px;">25</div>
<div class="t" style="top:673.50px;font-family:'Liberation Sans';font-size:13px;color:#333;left:13.27px;">26</div>
<div class="t" style="top:693.50px;font-family:'Liberation Sans';font-size:13px;color:#333;left:13.27px;">27</div>
<div class="t" style="top:713.50px;font-family:'Liberation Sans';font-size:13px;color:#333;left:13.27px;">28</div>
<div class="t" style="top:733.50px;font-family:'Liberation Sans';font-size:13px;color:#333;left:13.27px;">29</div>
<div class="t" style="top:753.50px;font-family:'Liberation Sans';font-size:13px;color:#333;left:13.27px;">30</div>
<div class="t" style="top:773.50px;font-family:'Liberation Sans';font-size:13px;color:#333;left:13.27px;">31</div>
<div class="t" style="top:793.50px;font-family:'Liberation Sans';font-size:13px;color:#333;left:13.27px;">32</div>
<div class="t" style="top:813.50px;font-family:'Liberation Sans';font-size:13px;color:#333;left:13.27px;">33</div>
<div class="t" style="top:833.50px;font-family:'Liberation Sans';font-size:13px;color:#333;left:13.27px;">34</div>
<div class="t" style="top:853.50px;font-family:'Liberation Sans';font-size:13px;color:#333;left:13.27px;">35</div>
<div class="t" style="top:873.50px;font-family:'Liberation Sans';font-size:13px;color:#333;left:13.27px;">36</div>
<div class="t" style="top:893.50px;font-family:'Liberation Sans';font-size:13px;color:#333;left:13.27px;">37</div>
<div class="t" style="top:913.50px;font-family:'Liberation Sans';font-size:13px;color:#333;left:13.27px;">38</div>
<div class="t" style="top:933.50px;font-family:'Liberation Sans';font-size:13px;color:#333;left:13.27px;">39</div>
<div class="t" style="top:953.50px;font-family:'Liberation Sans';font-size:13px;color:#333;left:13.27px;">40</div>
<div class="t" style="top:163.90px;font-family:'Liberation Serif';font-size:24.6px;color:#1f497d;font-weight:700;left:38px;">Bảng bán hàng</div>
<div class="t" style="top:194.00px;font-family:'Liberation Sans';font-size:13px;color:#000;left:36px;transform:scaleX(1.0160);transform-origin:0 0;">Từ ngày 01/01/2020</div>
<div class="t" style="top:214.00px;font-family:'Liberation Sans';font-size:13px;color:#000;left:36px;transform:scaleX(1.0295);transform-origin:0 0;">Đến ngày 30/12/2020</div>
<div class="t" style="top:234.00px;font-family:'Liberation Sans';font-size:13px;color:#000;left:36px;transform:scaleX(1.0516);transform-origin:0 0;">Mặt hàng</div>
<div class="t" style="top:234.00px;font-family:'Liberation Sans';font-size:13px;color:#000;left:107px;transform:scaleX(0.8985);transform-origin:0 0;">Lê</div>
<div class="t" style="top:234.00px;font-family:'Liberation Sans';font-size:13px;color:#000;left:249px;transform:scaleX(1.0121);transform-origin:0 0;">Tổng</div>
<div class="t" style="top:294.00px;font-family:'Liberation Sans';font-size:13px;color:#1f497d;font-weight:700;left:36px;transform:scaleX(0.9570);transform-origin:0 0;">Ngày bán</div>
<div class="t" style="top:294.00px;font-family:'Liberation Sans';font-size:13px;color:#1f497d;font-weight:700;left:107px;transform:scaleX(1.0164);transform-origin:0 0;">Mặt hàng</div>
<div class="t" style="top:294.00px;font-family:'Liberation Sans';font-size:13px;color:#1f497d;font-weight:700;left:178px;transform:scaleX(0.9764);transform-origin:0 0;">Số lượng</div>
<div class="t" style="top:294.00px;font-family:'Liberation Sans';font-size:13px;color:#1f497d;font-weight:700;left:249px;">Đơn giá</div>
<div class="t" style="top:294.00px;font-family:'Liberation Sans';font-size:13px;color:#1f497d;font-weight:700;left:313px;transform:scaleX(1.0143);transform-origin:0 0;">thành tiền</div>
<div class="t" style="top:314.00px;font-family:'Liberation Sans';font-size:13px;color:#000;left:51.19px;transform:scaleX(1.0433);transform-origin:100% 0;">5/1/2021</div>
<div class="t" style="top:314.00px;font-family:'Liberation Sans';font-size:13px;color:#000;left:107px;transform:scaleX(0.8985);transform-origin:0 0;">Lê</div>
<div class="t" style="top:314.00px;font-family:'Liberation Sans';font-size:13px;color:#000;left:231.27px;transform:scaleX(0.9607);transform-origin:100% 0;">5</div>
<div class="t" style="top:314.00px;font-family:'Liberation Sans';font-size:13px;color:#000;left:262.73px;transform:scaleX(1.0147);transform-origin:100% 0;">10,000</div>
<div class="t" style="top:314.00px;font-family:'Liberation Sans';font-size:13px;color:#000;left:375.73px;transform:scaleX(1.0147);transform-origin:100% 0;">50,000</div>
<div class="t" style="top:334.00px;font-family:'Liberation Sans';font-size:13px;color:#000;left:51.19px;transform:scaleX(1.0433);transform-origin:100% 0;">8/2/2021</div>
<div class="t" style="top:334.00px;font-family:'Liberation Sans';font-size:13px;color:#000;left:107px;transform:scaleX(1.0510);transform-origin:0 0;">táo</div>
<div class="t" style="top:334.00px;font-family:'Liberation Sans';font-size:13px;color:#000;left:231.27px;transform:scaleX(0.9607);transform-origin:100% 0;">6</div>
<div class="t" style="top:334.00px;font-family:'Liberation Sans';font-size:13px;color:#000;left:262.73px;transform:scaleX(1.0147);transform-origin:100% 0;">20,000</div>
<div class="t" style="top:334.00px;font-family:'Liberation Sans';font-size:13px;color:#000;left:368.50px;transform:scaleX(1.0170);transform-origin:100% 0;">120,000</div>
<div class="t" style="top:354.00px;font-family:'Liberation Sans';font-size:13px;color:#000;left:51.19px;transform:scaleX(1.0433);transform-origin:100% 0;">9/3/2021</div>
<div class="t" style="top:354.00px;font-family:'Liberation Sans';font-size:13px;color:#000;left:107px;transform:scaleX(1.0864);transform-origin:0 0;">ổi</div>
<div class="t" style="top:354.00px;font-family:'Liberation Sans';font-size:13px;color:#000;left:231.27px;transform:scaleX(0.9607);transform-origin:100% 0;">7</div>
<div class="t" style="top:354.00px;font-family:'Liberation Sans';font-size:13px;color:#000;left:262.73px;transform:scaleX(1.0147);transform-origin:100% 0;">15,000</div>
<div class="t" style="top:354.00px;font-family:'Liberation Sans';font-size:13px;color:#000;left:368.50px;transform:scaleX(1.0170);transform-origin:100% 0;">105,000</div>
<div class="t" style="top:374.00px;font-family:'Liberation Sans';font-size:13px;color:#000;left:51.19px;transform:scaleX(1.0433);transform-origin:100% 0;">5/4/2021</div>
<div class="t" style="top:374.00px;font-family:'Liberation Sans';font-size:13px;color:#000;left:107px;transform:scaleX(0.8985);transform-origin:0 0;">Lê</div>
<div class="t" style="top:374.00px;font-family:'Liberation Sans';font-size:13px;color:#000;left:231.27px;transform:scaleX(0.9607);transform-origin:100% 0;">8</div>
<div class="t" style="top:374.00px;font-family:'Liberation Sans';font-size:13px;color:#000;left:262.73px;transform:scaleX(1.0147);transform-origin:100% 0;">10,000</div>
<div class="t" style="top:374.00px;font-family:'Liberation Sans';font-size:13px;color:#000;left:375.73px;transform:scaleX(1.0147);transform-origin:100% 0;">80,000</div>
<div class="t" style="top:394.00px;font-family:'Liberation Sans';font-size:13px;color:#000;left:36px;transform:scaleX(1.0373);transform-origin:0 0;">15/5/2021</div>
<div class="t" style="top:394.00px;font-family:'Liberation Sans';font-size:13px;color:#000;left:107px;transform:scaleX(1.0864);transform-origin:0 0;">ổi</div>
<div class="t" style="top:394.00px;font-family:'Liberation Sans';font-size:13px;color:#000;left:231.27px;transform:scaleX(0.9607);transform-origin:100% 0;">9</div>
<div class="t" style="top:394.00px;font-family:'Liberation Sans';font-size:13px;color:#000;left:262.73px;transform:scaleX(1.0147);transform-origin:100% 0;">15,000</div>
<div class="t" style="top:394.00px;font-family:'Liberation Sans';font-size:13px;color:#000;left:368.50px;transform:scaleX(1.0170);transform-origin:100% 0;">135,000</div>
<div class="t" style="top:414.00px;font-family:'Liberation Sans';font-size:13px;color:#000;left:51.19px;transform:scaleX(1.0433);transform-origin:100% 0;">5/6/2021</div>
<div class="t" style="top:414.00px;font-family:'Liberation Sans';font-size:13px;color:#000;left:107px;transform:scaleX(1.0510);transform-origin:0 0;">táo</div>
<div class="t" style="top:414.00px;font-family:'Liberation Sans';font-size:13px;color:#000;left:231.27px;transform:scaleX(0.9607);transform-origin:100% 0;">8</div>
<div class="t" style="top:414.00px;font-family:'Liberation Sans';font-size:13px;color:#000;left:262.73px;transform:scaleX(1.0147);transform-origin:100% 0;">20,000</div>
<div class="t" style="top:414.00px;font-family:'Liberation Sans';font-size:13px;color:#000;left:368.50px;transform:scaleX(1.0170);transform-origin:100% 0;">160,000</div>
<div class="t" style="top:434.00px;font-family:'Liberation Sans';font-size:13px;color:#000;left:51.19px;transform:scaleX(1.0433);transform-origin:100% 0;">8/7/2021</div>
<div class="t" style="top:434.00px;font-family:'Liberation Sans';font-size:13px;color:#000;left:107px;transform:scaleX(0.8985);transform-origin:0 0;">Lê</div>
<div class="t" style="top:434.00px;font-family:'Liberation Sans';font-size:13px;color:#000;left:231.27px;transform:scaleX(0.9607);transform-origin:100% 0;">7</div>
<div class="t" style="top:434.00px;font-family:'Liberation Sans';font-size:13px;color:#000;left:262.73px;transform:scaleX(1.0147);transform-origin:100% 0;">10,000</div>
<div class="t" style="top:434.00px;font-family:'Liberation Sans';font-size:13px;color:#000;left:375.73px;transform:scaleX(1.0147);transform-origin:100% 0;">70,000</div>
<div class="t" style="top:234.00px;font-family:'Liberation Sans';font-size:13px;color:#000;font-weight:700;left:313px;transform:scaleX(1.0106);transform-origin:0 0;">=sumifs(thành_tiền,Mặt_hàng,B4,Ngày_bán,"&gt;=''&amp;B2,Ngày_bán,''&lt;=''&amp;B3)</div>
<div class="t" style="top:967.22px;font-family:'Liberation Sans';font-size:12.5px;color:#333;font-weight:700;left:80.2px;transform:scaleX(1.0488);transform-origin:0 0;">Sheet1</div>
<div class="t" style="top:967.22px;font-family:'Liberation Sans';font-size:12.5px;color:#444;left:142.5px;transform:scaleX(0.9842);transform-origin:0 0;">Sheet2</div>
<div class="t" style="top:967.22px;font-family:'Liberation Sans';font-size:12.5px;color:#444;left:202px;transform:scaleX(0.9968);transform-origin:0 0;">Sheet3</div>
<div class="t" style="top:984.84px;font-family:'Liberation Sans';font-size:12px;color:#333;left:16.5px;transform:scaleX(0.8943);transform-origin:0 0;">Edit</div>
<div class="t" style="top:984.84px;font-family:'Liberation Sans';font-size:12px;color:#8f8f8f;left:1486px;transform:scaleX(0.8794);transform-origin:0 0;">100%</div>
<div class="t" style="top:464.84px;font-family:'Liberation Sans';font-size:12px;color:#000;left:485.5px;transform:scaleX(0.9833);transform-origin:0 0;z-index:7;">Microsoft Excel</div>
<div class="t" style="top:498.69px;font-family:'Liberation Sans';font-size:11px;color:#000;left:546px;z-index:7;">The formula you typed contains an error.</div>
<div class="t" style="top:524.69px;font-family:'Liberation Sans';font-size:11px;color:#000;left:554px;transform:scaleX(0.9697);transform-origin:0 0;z-index:7;">For information about fixing common formula problems, click Help.</div>
<div class="t" style="top:537.69px;font-family:'Liberation Sans';font-size:11px;color:#000;left:554px;transform:scaleX(0.9838);transform-origin:0 0;z-index:7;">To get assistance in entering a function, click Function Wizard (Formulas tab, Function Library group).</div>
<div class="t" style="top:550.69px;font-family:'Liberation Sans';font-size:11px;color:#000;left:554px;z-index:7;">If you are not trying to enter a formula, avoid using an equal sign (=) or minus sign (-), or precede it with a single quotation mark (&#39;).</div>
<div class="t" style="top:579.07px;font-family:'Liberation Sans';font-size:11.5px;color:#000;left:795.19px;z-index:7;">OK</div>
<div class="t" style="top:579.07px;font-family:'Liberation Sans';font-size:11.5px;color:#000;left:870.67px;z-index:7;">Help</div>
<div class="t" style="top:1023.30px;font-family:'Liberation Sans';font-size:15px;color:#222;left:88px;transform:scaleX(0.9655);transform-origin:0 0;">Type here to search</div>
<div class="t" style="top:1024.15px;font-family:'Liberation Sans';font-size:14px;color:#fff;left:1304px;transform:scaleX(0.8951);transform-origin:0 0;">15°C</div>
<div class="t" style="top:1024.15px;font-family:'Liberation Sans';font-size:14px;color:#fff;left:1341px;transform:scaleX(0.9808);transform-origin:0 0;">Mưa nhỏ</div>
<div class="t" style="top:1023.92px;font-family:'Liberation Sans';font-size:12.5px;color:#fff;left:1533.5px;transform:scaleX(0.8120);transform-origin:0 0;">ENG</div>
<div class="t" style="top:1015.42px;font-family:'Liberation Sans';font-size:12.5px;color:#fff;left:1573.5px;transform:scaleX(0.9155);transform-origin:0 0;">1:03 AM</div>
<div class="t" style="top:1032.92px;font-family:'Liberation Sans';font-size:12.5px;color:#fff;left:1569.5px;transform:scaleX(0.9171);transform-origin:0 0;">2/12/2022</div>
</body></html>
